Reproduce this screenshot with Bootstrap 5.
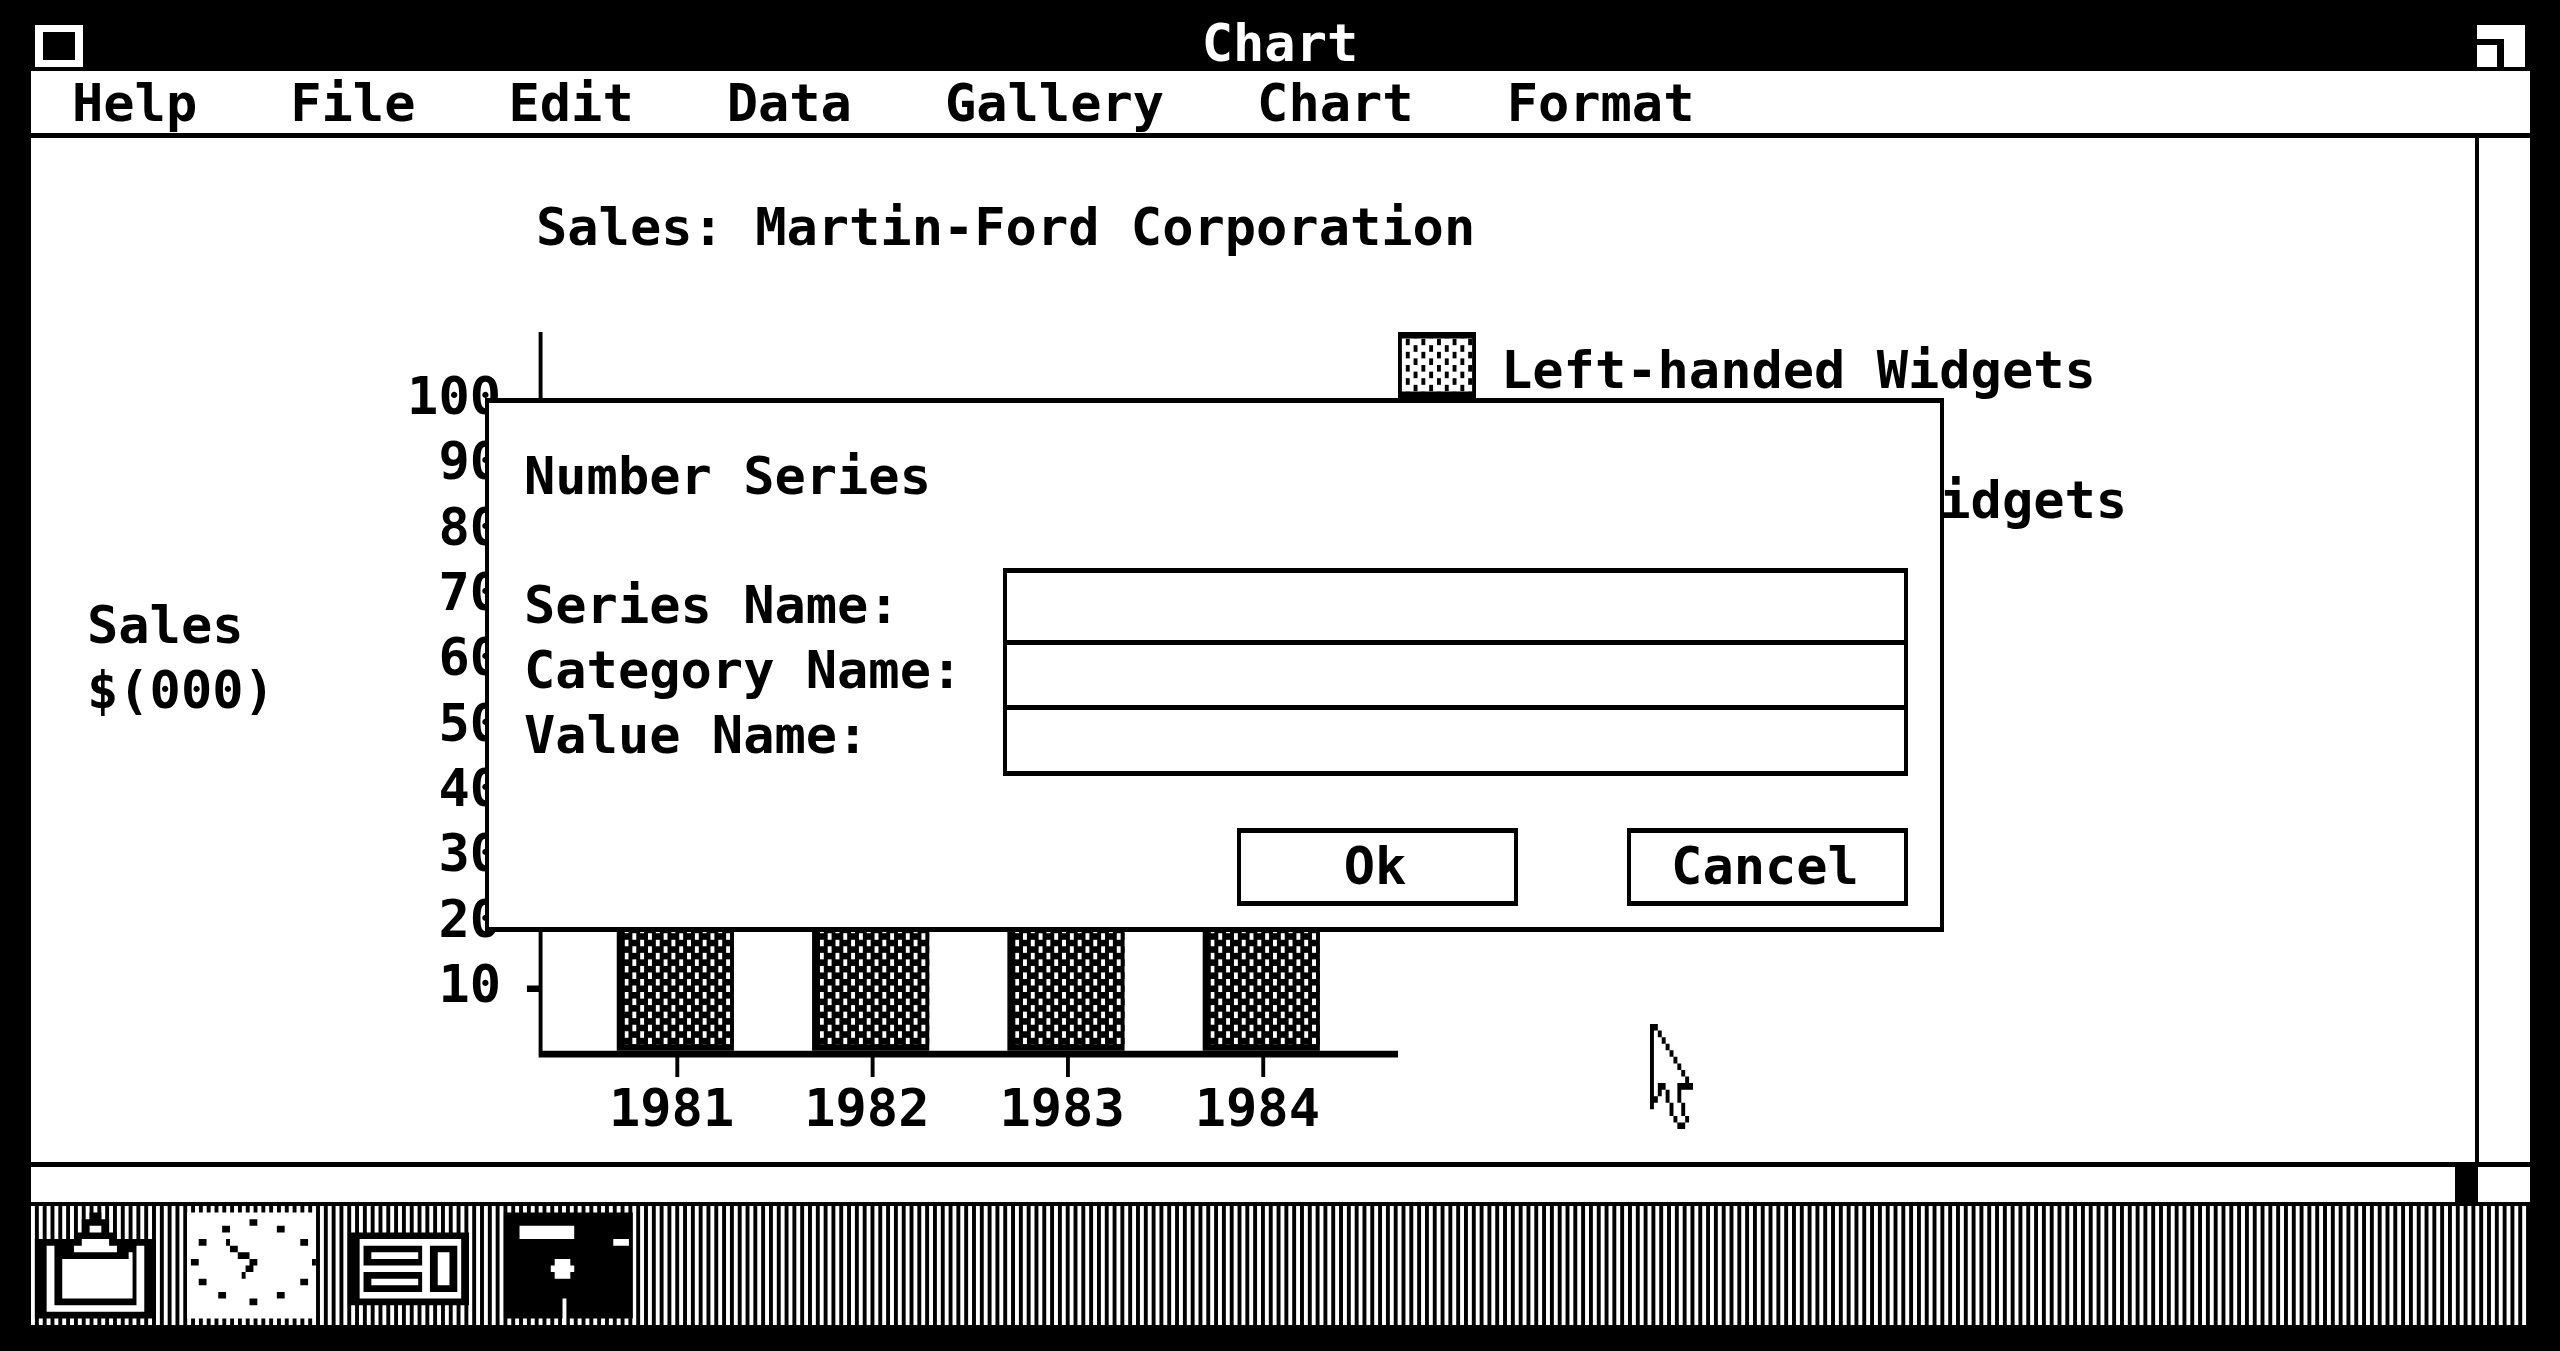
<!DOCTYPE html>
<html lang="en">
<head>
<meta charset="utf-8">
<meta name="viewport" content="width=device-width, initial-scale=1">
<title>Chart</title>
<link href="https://cdn.jsdelivr.net/npm/bootstrap@5.3.0/dist/css/bootstrap.min.css" rel="stylesheet">
<style>
  body { background: #000; color: #000; font: bold 52px/65px "DejaVu Sans Mono", "Liberation Mono", monospace; }
  button { font: inherit; color: inherit; }
  svg { display: block; }
  .desk { padding: 0 30px 26px 31px; }
  .titlebar { height: 71px; padding: 13px 5px 0 4px; }
  .titlebar h1 { font: inherit; line-height: 61px; }
  .box-btn { background: none; border: 0; padding: 0; }
  .close-box { width: 48px; height: 42px; border: solid #fff; border-width: 7px 8px; }
  .menubar { border-bottom: 5px solid #000; padding: 2px 0 0 41px; gap: 0 93px; }
  .menubar a { color: #000; text-decoration: none; line-height: 60px; }
  .vscroll { width: 55px; border-left: 4px solid #000; }
  .hscroll { height: 40px; border-top: 5px solid #000; padding-right: 52px; }
  .thumb { width: 23px; background: #000; }
  .chart-title { font: inherit; margin: 57px 0 72px 505px; }
  .axis-name { width: 300px; padding: 261px 0 0 56px; }
  .y-labels { width: 170px; height: 653px; margin: 32px 22px 0 0; }
  .plot { width: 875px; }
  .plot svg { width: 875px; height: 745px; }
  .years { width: 781px; margin-left: 51px; line-height: 62px; }
  .legend-list { gap: 60px; }
  .legend-list li { gap: 25px; }
  .legend-list svg { width: 78px; height: 66px; }
  .legend-list span { padding-top: 7px; white-space: nowrap; line-height: 63px; }
  .dialog-box { left: 454px; top: 260px; width: 1459px; padding: 41px 32px 21px 35px; border: solid #000; border-width: 5px 4px; }
  .dialog-box h2 { font: inherit; margin: 0 0 59px; }
  .names { padding-top: 5px; }
  .fields { width: 905px; }
  .fields input { font: inherit; height: 71px; border: solid #000; border-width: 5px 4px; border-radius: 0; outline: 0; padding: 0 12px; min-width: 0; }
  .fields input:first-child { height: 78px; }
  .fields input + input { margin-top: -6px; }
  .actions { margin-top: 52px; gap: 109px; }
  .actions button { width: 281px; height: 78px; padding: 0 5px 3px 0; background: #fff; border: solid #000; border-width: 5px 4px; line-height: 60px; }
  .pointer-arrow { left: 1619px; top: 886px; width: 43px; height: 105px; }
  .tray { height: 119px; margin-top: 4px; }
  .tray-icons { width: 625px; height: 119px; }
  .tray-icons button { flex: 1 1 0; background: none; border: 0; padding: 0; }
</style>
<script src="https://cdn.jsdelivr.net/npm/bootstrap@5.3.0/dist/js/bootstrap.bundle.min.js"></script>
</head>
<body>
<div class="desk d-flex flex-column min-vh-100">
  <header class="titlebar d-flex justify-content-between text-white">
    <button class="box-btn mt-2 pt-1 align-self-start" type="button" aria-label="Close"><span class="close-box d-block"></span></button>
    <h1 class="m-0">Chart</h1>
    <button class="box-btn mt-2 pt-1 align-self-start" type="button" aria-label="Zoom">
      <svg width="48" height="42" viewBox="0 0 48 42" fill="#fff"><path d="M0 0H48V42H27V14H0Z"/><path d="M0 20H20V42H0Z"/></svg>
    </button>
  </header>

  <nav class="menubar d-flex flex-wrap bg-white">
    <a href="#">Help</a><a href="#">File</a><a href="#">Edit</a><a href="#">Data</a><a href="#">Gallery</a><a href="#">Chart</a><a href="#">Format</a>
  </nav>

  <main class="d-flex flex-grow-1 bg-white position-relative">
    <section class="flex-grow-1">
      <h2 class="chart-title">Sales: Martin-Ford Corporation</h2>
      <div class="d-flex align-items-start">
        <div class="axis-name">Sales<br>$(000)</div>
        <div class="y-labels d-flex flex-column justify-content-between text-end">
          <span>100</span><span>90</span><span>80</span><span>70</span><span>60</span><span>50</span><span>40</span><span>30</span><span>20</span><span>10</span>
        </div>
        <div class="plot">
          <svg viewBox="0 0 224 114" preserveAspectRatio="none" role="img" aria-label="Sales by year">
            <defs>
              <pattern id="weave" width="4" height="2" patternUnits="userSpaceOnUse">
                <path d="M0 0H4V2H0Z"/><path fill="#fff" d="M0 0H1V1H0ZM2 1H3V2H2Z"/>
              </pattern>
              <g id="bar"><path d="M0 40H30V110H0Z"/><path fill="url(#weave)" d="M2 40H30V109H2Z"/><path d="M15 110H16V114H15Z"/></g>
            </defs>
            <path d="M4 0H5V110H224V111H4ZM1 100H4V101H1Z"/>
            <use href="#bar" transform="translate(24 0)"/>
            <use href="#bar" transform="translate(74 0)"/>
            <use href="#bar" transform="translate(124 0)"/>
            <use href="#bar" transform="translate(174 0)"/>
          </svg>
          <div class="years d-flex justify-content-around text-center"><span>1981</span><span>1982</span><span>1983</span><span>1984</span></div>
        </div>
        <ul class="legend-list list-unstyled d-flex flex-column m-0">
          <li class="d-flex align-items-start">
            <svg viewBox="0 0 20 10" preserveAspectRatio="none">
              <defs><pattern id="dots" width="4" height="2" patternUnits="userSpaceOnUse"><path d="M0 0H1V1H0ZM2 1H3V2H2Z"/></pattern></defs>
              <path d="M0 0H20V10H0Z"/><path fill="#fff" d="M1 1H19V9H1Z"/><path fill="url(#dots)" d="M1 1H19V9H1Z"/>
            </svg>
            <span>Left-handed Widgets</span>
          </li>
          <li class="d-flex align-items-start">
            <svg viewBox="0 0 20 10" preserveAspectRatio="none"><path d="M0 0H20V10H0Z"/><path fill="url(#weave)" d="M1 1H19V9H1Z"/></svg>
            <span>Right-handed Widgets</span>
          </li>
        </ul>
      </div>
    </section>
    <div class="vscroll flex-shrink-0"></div>

    <form class="dialog-box position-absolute bg-white" role="dialog" aria-labelledby="dlg-title">
      <h2 id="dlg-title">Number Series</h2>
      <div class="d-flex justify-content-between">
        <div class="names d-flex flex-column">
          <label for="series-name">Series Name:</label>
          <label for="category-name">Category Name:</label>
          <label for="value-name">Value Name:</label>
        </div>
        <div class="fields d-flex flex-column">
          <input id="series-name" type="text">
          <input id="category-name" type="text">
          <input id="value-name" type="text">
        </div>
      </div>
      <div class="actions d-flex justify-content-end">
        <button type="button">Ok</button>
        <button type="button">Cancel</button>
      </div>
    </form>

    <svg class="pointer-arrow position-absolute" viewBox="0 0 11 16" preserveAspectRatio="none" aria-hidden="true">
      <path fill="#fff" d="M1 1H2L9 9H7V12L8 14V15H7L5 12L4 9H2L1 11Z"/>
      <path d="M0 0H2V1H1V11H2V12H1V13H0ZM2 1h1v1h-1zM3 2h1v1h-1zM4 3h1v1h-1zM5 4h1v1h-1zM6 5h1v1h-1zM7 6h1v1h-1zM8 7h1v1h-1zM9 8h1v1h1v1h-3v2h-1v-3h2zM2 9h2v1h-1v1h-1zM4 10h1v2h-1zM5 12h1v2h-1zM8 12h1v2h-1zM6 14h1v1h-1zM9 14h1v1h-1zM7 15h2v1h-2z"/>
    </svg>
  </main>

  <div class="hscroll d-flex justify-content-end bg-white"><div class="thumb"></div></div>

  <footer class="tray position-relative">
    <svg class="position-absolute" width="100%" height="100%" viewBox="0 0 640 18" preserveAspectRatio="none" aria-hidden="true">
      <defs><pattern id="stripes" width="2" height="18" patternUnits="userSpaceOnUse"><path fill="#fff" d="M0 0H1V18H0Z"/></pattern></defs>
      <path fill="url(#stripes)" d="M0 0H640V18H0Z"/>
    </svg>
    <div class="tray-icons d-flex position-relative">
      <button type="button" aria-label="Clipboard">
        <svg width="100%" height="100%" viewBox="0 0 40 18" preserveAspectRatio="none">
          <path d="M1 5H11V4H13V2H15V1H18V2H20V4H22V5H32V17H1Z"/>
          <path fill="#fff" d="M15 3H18V4H15ZM13 5H20V6H22V7H11V6H13ZM4 6H6V15H27V6H29V16H4ZM8 8H25V7H26V14H8Z"/>
        </svg>
      </button>
      <button type="button" aria-label="Clock">
        <svg width="100%" height="100%" viewBox="0 0 40 18" preserveAspectRatio="none">
          <path fill="#fff" d="M0 1H33V17H0Z"/>
          <path d="M16 2h2v1h-2zM9 3h2v1h-2zM23 3h2v1h-2zM3 5h2v1h-2zM29 5h2v1h-2zM1 8h2v1h-2zM32 8h1v1h-1zM3 11h2v1h-2zM29 11h2v1h-2zM8 13h2v1h-2zM23 13h2v1h-2zM16 14h2v1h-2zM10 5h1v1h-1zM11 6h2v1h-2zM13 7h3v1h-3zM16 8h2v1h-2zM15 9h2v1h-2zM14 10h1v1h-1z"/>
        </svg>
      </button>
      <button type="button" aria-label="File cabinet">
        <svg width="100%" height="100%" viewBox="0 0 40 18" preserveAspectRatio="none">
          <path d="M1 4H32V15H1Z"/><path fill="#fff" d="M4 5H30V14H4Z"/>
          <path d="M5 6H20V9H5ZM5 10H20V13H5ZM22 6H29V13H22Z"/>
          <path fill="#fff" d="M7 7H19V8H7ZM7 11H19V12H7ZM24 7H27V12H24Z"/>
        </svg>
      </button>
      <button type="button" aria-label="Disk">
        <svg width="100%" height="100%" viewBox="0 0 40 18" preserveAspectRatio="none">
          <path d="M1 1H34V17H1Z"/>
          <path fill="#fff" d="M5 3H19V5H5ZM29 5H33V6H29ZM14 8H18V9H19V10H18V11H14V10H13V9H14ZM16 14H17V18H16Z"/>
        </svg>
      </button>
    </div>
  </footer>
</div>
</body>
</html>
